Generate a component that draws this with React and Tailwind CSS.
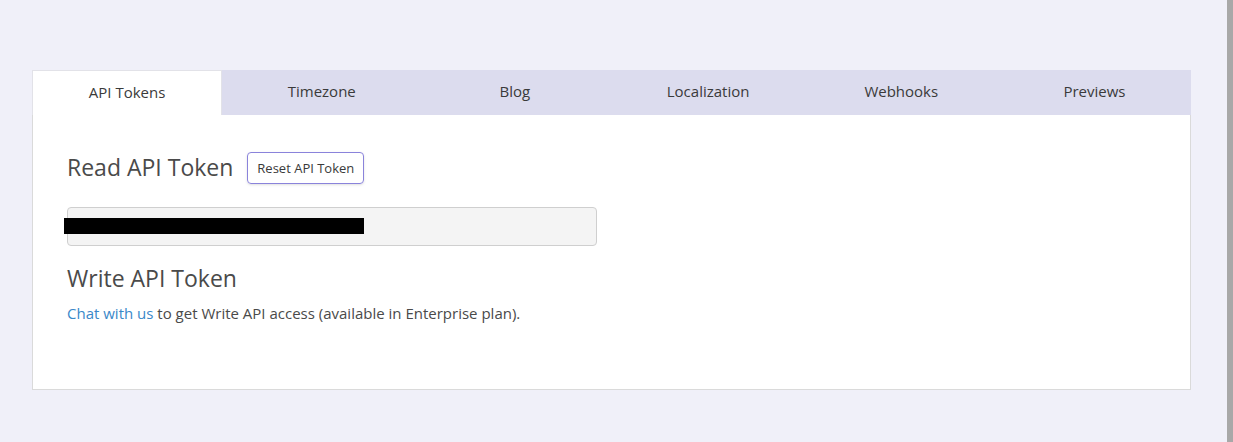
import { useState } from 'react'

const tabs = ['API Tokens', 'Timezone', 'Blog', 'Localization', 'Webhooks', 'Previews']

export default function App() {
  const [active, setActive] = useState(0)

  return (
    <div className="flex h-[442px] w-full bg-[#f0f0f9]" style={{ fontFamily: '"Open Sans", sans-serif' }}>
      <div className="flex-1 pt-[70px] pl-[32px] pr-[36px]">
        {/* Tab bar */}
        <div className="flex h-[45px] bg-[#dcdcee]">
          {tabs.map((t, i) => (
            <div key={t} className="flex-1 flex">
              <button
                onClick={() => setActive(i)}
                className={
                  'flex-1 flex items-center justify-center pb-[2px] text-[15px] text-[#3a3a3a] ' +
                  (i === active ? 'mr-[3px] bg-white border-l border-t border-r border-[#e2e2e8]' : '')
                }
              >
                {t}
              </button>
            </div>
          ))}
        </div>

        {/* Panel body */}
        <div className="h-[275px] bg-white border border-t-0 border-[#dadada] pl-[34px] pt-[35px]">
          <div className="flex items-center gap-[14px]">
            <h2 className="text-[23px] text-[#4a4a4a]">Read API Token</h2>
            <button className="mt-[2px] h-[32px] px-[9px] rounded border border-[#8a83db] text-[13px] text-[#3a3a3a] shadow-sm">
              Reset API Token
            </button>
          </div>

          <div className="relative mt-[22px] h-[39px] w-[530px] rounded border border-[#cfcfcf] bg-[#f4f4f4]">
            <div className="absolute left-[-4px] top-[10px] h-[16px] w-[300px] bg-black" />
          </div>

          <h2 className="mt-[16px] text-[23px] leading-[32px] text-[#4a4a4a]">Write API Token</h2>
          <p className="mt-[8px] text-[15px] text-[#4a4a4a]">
            <a href="#" className="text-[#3a88c9]">Chat with us</a> to get Write API access (available in Enterprise plan).
          </p>
        </div>
      </div>
      <div className="w-[6px] bg-[#a8a8a8]" />
    </div>
  )
}
